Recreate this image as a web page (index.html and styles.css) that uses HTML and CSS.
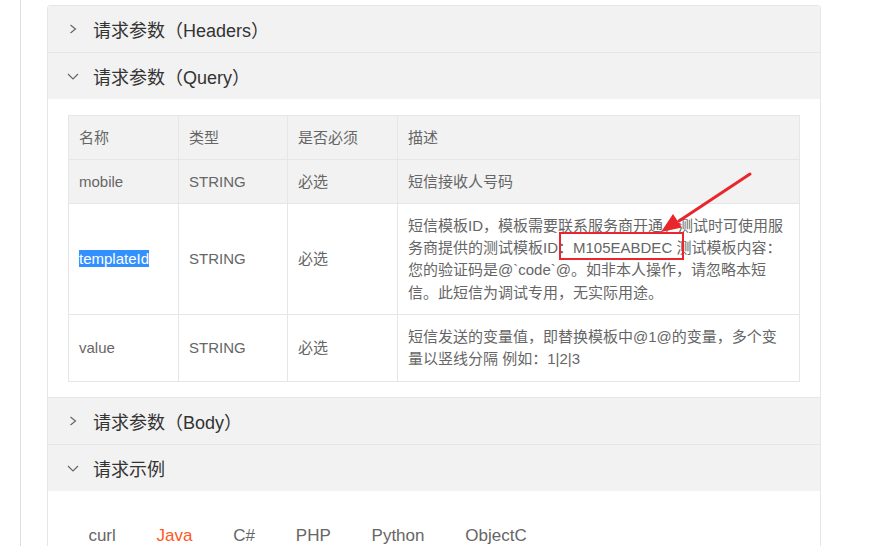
FILE: index.html
```html
<!DOCTYPE html>
<html lang="zh-CN">
<head>
<meta charset="utf-8">
<title>API 文档</title>
<link rel="stylesheet" href="styles.css">
</head>
<body>
<div class="page">
  <div class="card">
    <div class="item">
      <div class="item-title">
        <svg class="chev" viewBox="0 0 12 12"><path d="M3.5 2 L8.5 6 L3.5 10"/></svg>
        <span>请求参数（Headers）</span>
      </div>
    </div>
    <div class="item">
      <div class="item-title">
        <svg class="chev" viewBox="0 0 12 12"><path d="M1 4 L6 9 L11 4"/></svg>
        <span>请求参数（Query）</span>
      </div>
      <div class="item-content">
        <table class="params">
          <colgroup>
            <col class="c1"><col class="c2"><col class="c3"><col class="c4">
          </colgroup>
          <thead>
            <tr><th>名称</th><th>类型</th><th>是否必须</th><th class="desc">描述</th></tr>
          </thead>
          <tbody>
            <tr class="hover"><td>mobile</td><td>STRING</td><td>必选</td><td class="desc">短信接收人号码</td></tr>
            <tr><td><span class="sel">templateId</span></td><td>STRING</td><td>必选</td><td class="desc">短信模板ID，模板需要联系服务商开通，测试时可使用服务商提供的测试模板ID：M105EABDEC 测试模板内容：您的验证码是@`code`@。如非本人操作，请忽略本短信。此短信为调试专用，无实际用途。</td></tr>
            <tr><td>value</td><td>STRING</td><td>必选</td><td class="desc">短信发送的变量值，即替换模板中@1@的变量，多个变<br>量以竖线分隔 例如：1|2|3</td></tr>
          </tbody>
        </table>
      </div>
    </div>
    <div class="item">
      <div class="item-title">
        <svg class="chev" viewBox="0 0 12 12"><path d="M3.5 2 L8.5 6 L3.5 10"/></svg>
        <span>请求参数（Body）</span>
      </div>
    </div>
    <div class="item">
      <div class="item-title">
        <svg class="chev" viewBox="0 0 12 12"><path d="M1 4 L6 9 L11 4"/></svg>
        <span>请求示例</span>
      </div>
      <div class="item-content examples">
        <ul class="tabs">
          <li>curl</li>
          <li class="active">Java</li>
          <li>C#</li>
          <li>PHP</li>
          <li>Python</li>
          <li>ObjectC</li>
        </ul>
      </div>
    </div>
  </div>
</div>
<svg class="annot" viewBox="0 0 876 546" width="876" height="546">
  <rect x="560" y="233" width="123" height="26" fill="none" stroke="#e8262b" stroke-width="2"/>
  <line x1="750" y1="174" x2="679" y2="221" stroke="#e8262b" stroke-width="3" stroke-linecap="round"/>
  <polygon points="661,232 682,227.5 673,214" fill="#e8262b"/>
</svg>
</body>
</html>
```
FILE: styles.css
```css
* { box-sizing: border-box; }
html, body {
  margin: 0;
  height: 100%;
  overflow: hidden;
  background: #fff;
  font-family: "Liberation Sans", "Noto Sans CJK SC", sans-serif;
}
.page {
  margin-left: 20px;
  border-left: 1px solid #dcdce4;
  min-height: 100vh;
  padding: 5px 0 0 26px;
}
.card {
  width: 774px;
  border: 1px solid #e6e6e6;
  border-radius: 3px;
  overflow: hidden;
  min-height: 700px;
}
.item + .item { border-top: 1px solid #e6e6e6; }
.item-title {
  display: flex;
  align-items: center;
  height: 46px;
  padding-left: 19px;
  background: #f2f2f2;
  color: #333;
  font-size: 18px;
}
.chev {
  width: 12px;
  height: 12px;
  margin-right: 14px;
  flex: none;
}
.chev path {
  fill: none;
  stroke: #666;
  stroke-width: 1.2;
}
.item-content { padding: 16px 20px 15px; }
.params {
  width: 732px;
  border-collapse: collapse;
  table-layout: fixed;
  font-size: 15px;
  line-height: 22.2px;
  color: #666;
}
.params .c1 { width: 110px; }
.params .c2 { width: 109px; }
.params .c3 { width: 110px; }
.params th, .params td {
  border: 1px solid #e6e6e6;
  padding: 10.5px 11px 10.5px 10px;
  text-align: left;
  font-weight: normal;
  vertical-align: middle;
}
.params .desc { padding-right: 12px; }
.params thead tr, .params tr.hover { background: #f2f2f2; }
.sel { background: #3390ff; color: #fff; }
.examples { padding: 22px 20px 0; }
.tabs {
  list-style: none;
  margin: 0;
  padding: 0;
  display: flex;
  height: 46px;
}
.tabs li {
  padding: 0 20.4px;
  line-height: 46px;
  font-size: 17px;
  color: #666;
}
.tabs li.active { color: #ff5722; }
.annot {
  position: absolute;
  left: 0;
  top: 0;
  pointer-events: none;
}
```
